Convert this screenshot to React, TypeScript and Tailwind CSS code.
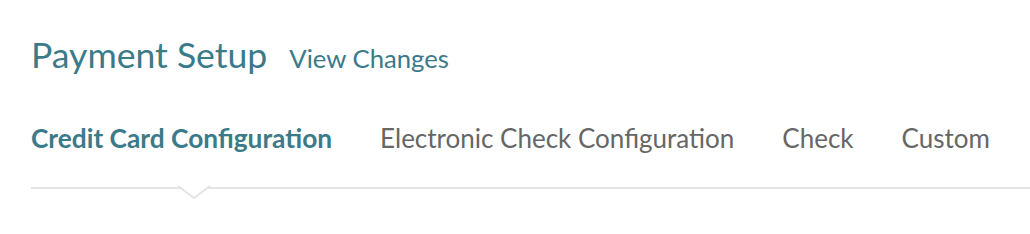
import React from 'react';

// ZWNJ keeps Lato from joining "ti" into a ligature
const tabs = [
  { label: 'Credit Card Configura\u200Ction', active: true },
  { label: 'Electronic Check Configura\u200Ction', active: false },
  { label: 'Check', active: false },
  { label: 'Custom', active: false },
];

const App: React.FC = () => {
  return (
    <div className="w-[1030px] h-[234px] bg-white font-['Lato',sans-serif] pl-[31px] pt-[33px] overflow-hidden">
      <div className="flex items-baseline gap-[22px]">
        <h1 className="text-[35.6px] leading-[44px] text-[#3b7a89]">Payment Setup</h1>
        <a className="text-[25.7px] text-[#3b7a89]">View Changes</a>
      </div>

      <div className="relative mt-[44px] border-b-2 border-[#e4e4e4] pb-[33px]">
        <div className="flex gap-[48px]">
          {tabs.map(t => (
            <span
              key={t.label}
              className={
                t.active
                  ? 'text-[26.3px] leading-[32px] font-bold text-[#3b7a89]'
                  : 'text-[26px] leading-[32px] text-[#666666]'
              }
            >
              {t.label}
            </span>
          ))}
        </div>
        <svg
          className="absolute left-[147px] top-[100%] -mt-[2px]"
          width="32"
          height="14"
          viewBox="0 0 32 14"
        >
          <polygon points="0,0 32,0 16,13" fill="#ffffff" />
          <polyline points="0,1 16,13 32,1" fill="none" stroke="#e4e4e4" strokeWidth="2" />
        </svg>
      </div>
    </div>
  );
};

export default App;
